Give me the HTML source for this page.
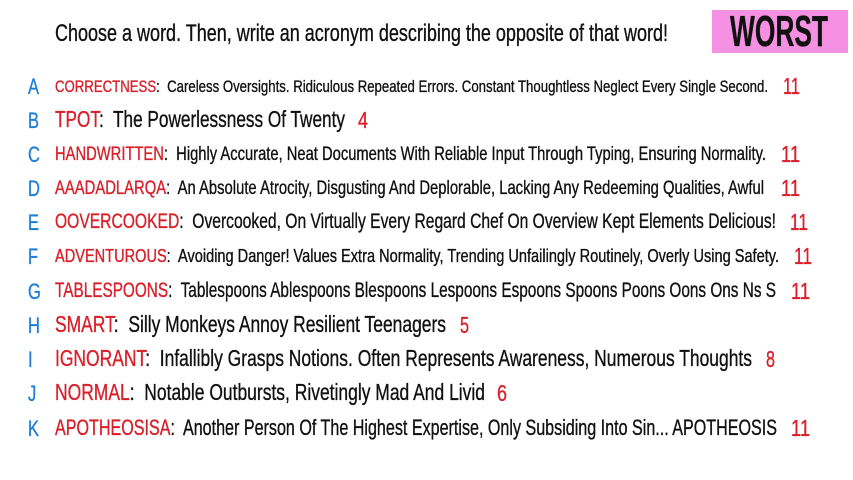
<!DOCTYPE html>
<html><head><meta charset="utf-8">
<style>
html,body{margin:0;padding:0;}
body{width:853px;height:480px;background:#fff;position:relative;overflow:hidden;font-family:"Liberation Sans",sans-serif;}
.t{position:absolute;white-space:nowrap;transform-origin:0 50%;line-height:1;-webkit-text-stroke:0.35px currentColor;}
.L{color:#1f7fd6;}
.r{color:#d9202a;}
.k{color:#111;}
#worst{position:absolute;left:712px;top:10px;width:136px;height:43px;background:#f590e2;}
</style></head><body>
<div id="worst"></div>
<div class="t k" id="h" style="left:55px;top:22px;font-size:24px;">Choose a word. Then, write an acronym describing the opposite of that word!</div>
<div class="t k" id="w" style="left:730px;top:10px;font-size:44px;font-weight:bold;">WORST</div>
<div id="rows"></div>
<script>
var rows=[
["A","CORRECTNESS","Careless Oversights. Ridiculous Repeated Errors. Constant Thoughtless Neglect Every Single Second.","11",87,17,768,783,800],
["B","TPOT","The Powerlessness Of Twenty","4",121,23,345,358,368],
["C","HANDWRITTEN","Highly Accurate, Neat Documents With Reliable Input Through Typing, Ensuring Normality.","11",155,19,766,781,800],
["D","AAADADLARQA","An Absolute Atrocity, Disgusting And Deplorable, Lacking Any Redeeming Qualities, Awful","11",189,19,764,781,800],
["E","OOVERCOOKED","Overcooked, On Virtually Every Regard Chef On Overview Kept Elements Delicious!","11",223,21,776,790,808],
["F","ADVENTUROUS","Avoiding Danger! Values Extra Normality, Trending Unfailingly Routinely, Overly Using Safety.","11",257,18,779,794,812],
["G","TABLESPOONS","Tablespoons Ablespoons Blespoons Lespoons Espoons Spoons Poons Oons Ons Ns S","11",292,21,776,791,810],
["H","SMART","Silly Monkeys Annoy Resilient Teenagers","5",326,23,446,460,469],
["I","IGNORANT","Infallibly Grasps Notions. Often Represents Awareness, Numerous Thoughts","8",360,23,752,766,775],
["J","NORMAL","Notable Outbursts, Rivetingly Mad And Livid","6",394,23,485,497,507],
["K","APOTHEOSISA","Another Person Of The Highest Expertise, Only Subsiding Into Sin... APOTHEOSIS","11",429,22,777,791,810]
];
var c=document.getElementById('rows');
function fit(el,w){var nw=el.getBoundingClientRect().width;if(nw>0)el.style.transform='scaleX('+(w/nw)+')';}
rows.forEach(function(r){
 var cy=r[4],fs=r[5];
 var L=document.createElement('div');L.className='t L';L.textContent=r[0];
 L.style.fontSize='22px';L.style.left='28px';L.style.top=(cy-11)+'px';L.style.transform='scaleX(0.75)';c.appendChild(L);
 var T=document.createElement('div');T.className='t k';
 T.innerHTML='<span class="r">'+r[1]+'</span>:&nbsp; '+r[2];
 T.style.fontSize=fs+'px';T.style.left='55px';T.style.top=(cy-fs*0.55)+'px';c.appendChild(T);
 fit(T,r[6]-55);
 var N=document.createElement('div');N.className='t r';N.textContent=r[3];
 N.style.fontSize='23px';N.style.left=r[7]+'px';N.style.top=(cy-12)+'px';c.appendChild(N);
 fit(N,r[8]-r[7]);
});
fit(document.getElementById('h'),668-55);
fit(document.getElementById('w'),828-730);
</script>
</body></html>
